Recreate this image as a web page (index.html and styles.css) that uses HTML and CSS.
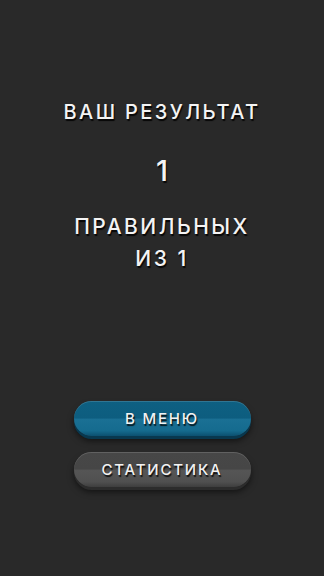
FILE: index.html
```html
<!DOCTYPE html>
<html lang="ru">
<head>
<meta charset="utf-8">
<title>Результат</title>
<link rel="stylesheet" href="styles.css">
</head>
<body>
<main class="screen">
  <section class="result">
    <h1 class="title">ВАШ РЕЗУЛЬТАТ</h1>
    <div class="score">1</div>
    <p class="summary">ПРАВИЛЬНЫХ<br>ИЗ 1</p>
  </section>
  <nav class="actions">
    <button class="btn btn-blue">В МЕНЮ</button>
    <button class="btn btn-grey">СТАТИСТИКА</button>
  </nav>
</main>
</body>
</html>
```

FILE: styles.css
```css
html, body {
  margin: 0;
  padding: 0;
  background: #292929;
}
.screen {
  width: 324px;
  height: 576px;
  display: flex;
  flex-direction: column;
  align-items: center;
  font-family: "Inter", "DejaVu Sans", sans-serif;
  color: #f4f4f4;
  text-shadow: 1px 2px 1px rgba(0,0,0,0.85);
}
.result {
  display: flex;
  flex-direction: column;
  align-items: center;
  padding-top: 98px;
}
.title {
  margin: 0;
  font-size: 20px;
  line-height: 28px;
  font-weight: 500;
  letter-spacing: 2.4px;
}
.score {
  margin-top: 27px;
  font-size: 29px;
  line-height: 36px;
  font-weight: 500;
}
.summary {
  margin: 22px 0 0;
  font-size: 21px;
  line-height: 32px;
  font-weight: 500;
  text-align: center;
  letter-spacing: 2.5px;
}
.actions {
  display: flex;
  flex-direction: column;
  align-items: center;
  gap: 16px;
  margin-top: 126px;
}
.btn {
  width: 177px;
  height: 35px;
  border: none;
  border-radius: 18px;
  font-family: inherit;
  font-size: 15px;
  font-weight: 500;
  color: #f2f2f2;
  letter-spacing: 1.8px;
  text-shadow: 1px 2px 1px rgba(0,0,0,0.8);
  padding: 0;
}
.btn-blue {
  background: linear-gradient(#0e6082 0%, #0d5d7f 48%, #1a7094 53%, #156b8e 85%, #0c5070 100%);
  box-shadow: 0 3px 0 #08384f, 0 5px 6px rgba(0,0,0,0.55), inset 0 1px 0 rgba(255,255,255,0.14);
}
.btn-grey {
  background: linear-gradient(#474747 0%, #464646 48%, #555555 53%, #505050 85%, #3e3e3e 100%);
  box-shadow: 0 3px 0 #2c2c2c, 0 5px 6px rgba(0,0,0,0.55), inset 0 1px 0 rgba(255,255,255,0.14);
}
```
